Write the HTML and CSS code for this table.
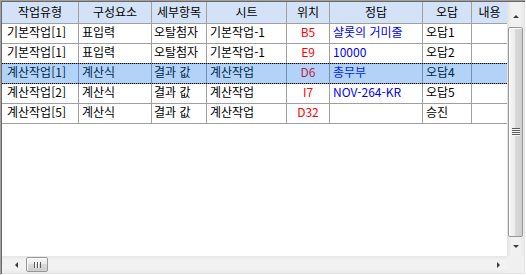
FILE: index.html
```html
<!DOCTYPE html>
<html lang="ko">
<head>
<meta charset="utf-8">
<title>Grid</title>
<link rel="stylesheet" href="styles.css">
</head>
<body>
<div class="grid">
  <div class="data">
    <div class="row head">
      <div class="c">작업유형</div>
      <div class="c">구성요소</div>
      <div class="c">세부항목</div>
      <div class="c">시트</div>
      <div class="c">위치</div>
      <div class="c">정답</div>
      <div class="c">오답</div>
      <div class="c last">내용</div>
    </div>
    <div class="row">
      <div class="c first">기본작업[1]</div>
      <div class="c">표입력</div>
      <div class="c narrow">오탈첨자</div>
      <div class="c">기본작업-1</div>
      <div class="c loc">B5</div>
      <div class="c ans">샬롯의 거미줄</div>
      <div class="c">오답1</div>
      <div class="c last"></div>
    </div>
    <div class="row">
      <div class="c first">기본작업[1]</div>
      <div class="c">표입력</div>
      <div class="c narrow">오탈첨자</div>
      <div class="c">기본작업-1</div>
      <div class="c loc">E9</div>
      <div class="c ans">10000</div>
      <div class="c">오답2</div>
      <div class="c last"></div>
    </div>
    <div class="row sel">
      <div class="c first">계산작업[1]</div>
      <div class="c">계산식</div>
      <div class="c narrow">결과 값</div>
      <div class="c">계산작업</div>
      <div class="c loc">D6</div>
      <div class="c ans">총무부</div>
      <div class="c">오답4</div>
      <div class="c last"></div>
    </div>
    <div class="row">
      <div class="c first">계산작업[2]</div>
      <div class="c">계산식</div>
      <div class="c narrow">결과 값</div>
      <div class="c">계산작업</div>
      <div class="c loc">I7</div>
      <div class="c ans">NOV-264-KR</div>
      <div class="c">오답5</div>
      <div class="c last"></div>
    </div>
    <div class="row">
      <div class="c first">계산작업[5]</div>
      <div class="c">계산식</div>
      <div class="c narrow">결과 값</div>
      <div class="c">계산작업</div>
      <div class="c loc">D32</div>
      <div class="c ans"></div>
      <div class="c">승진</div>
      <div class="c last"></div>
    </div>
  </div>
  <div class="vscroll">
    <div class="vbtn up"><span class="tri-up"></span></div>
    <div class="vthumb"><span class="vgrip"></span></div>
    <div class="vbtn down"><span class="tri-down"></span></div>
  </div>
  <div class="hscroll">
    <div class="hbtn left"><span class="tri-left"></span></div>
    <div class="hthumb"><span class="hgrip"></span></div>
    <div class="htrack"></div>
    <div class="hbtn right"><span class="tri-right"></span></div>
  </div>
  <div class="corner"></div>
</div>
</body>
</html>
```

FILE: styles.css
```css
html, body {
  margin: 0;
  padding: 0;
  background: #ffffff;
}

body {
  font-family: "Noto Sans CJK KR", "Noto Sans", sans-serif;
  font-size: 12px;
  color: #000000;
}

.grid {
  width: 526px;
  height: 275px;
  box-sizing: border-box;
  border: 1px solid;
  border-color: #a0a0a0 #ffffff #ffffff #a0a0a0;
  padding: 1px;
  box-shadow: inset 1px 1px 0 #696969, inset -1px -1px 0 #e3e3e3;
  display: grid;
  grid-template-columns: 505px 17px;
  grid-template-rows: 254px 17px;
}

.data {
  background: #ffffff;
  overflow: hidden;
}

.row {
  display: grid;
  grid-template-columns: 77px 73px 55px 80px 43px 93px 49px 35px;
}

.c {
  box-sizing: border-box;
  height: 20px;
  border-right: 1px solid #a0a0a0;
  border-bottom: 1px solid #a0a0a0;
  padding-left: 3px;
  line-height: 15px;
  white-space: nowrap;
}

.c.first {
  padding-left: 5px;
}

.c.narrow {
  padding-left: 2px;
}

.c.last {
  border-right: none;
}

.c.loc {
  padding-left: 0;
  text-align: center;
  color: #ff0000;
}

.c.ans {
  color: #0000ff;
}

.head .c {
  height: 22px;
  line-height: 19px;
  padding-left: 0;
  text-align: center;
  background: #d3e2f6;
}

.row.sel {
  position: relative;
}

.row.sel::after {
  content: "";
  position: absolute;
  left: 0;
  right: 0;
  top: -1px;
  bottom: 0;
  border-top: 1px dotted #000000;
  border-bottom: 1px dotted #000000;
  background: rgba(0, 110, 230, 0.3);
}

/* vertical scrollbar */
.vscroll {
  display: flex;
  flex-direction: column;
  background: linear-gradient(to right, #e2e2e2, #f1f1f1 25%, #f1f1f1 75%, #e9e9e9);
}

.vbtn {
  display: flex;
  justify-content: center;
  box-sizing: border-box;
}

.vbtn.up {
  height: 25px;
  padding-top: 13px;
}

.vbtn.down {
  flex: 1;
  align-items: center;
}

.tri-up {
  width: 0;
  height: 0;
  border-left: 3px solid transparent;
  border-right: 3px solid transparent;
  border-bottom: 3px solid #3c3c3c;
}

.tri-down {
  width: 0;
  height: 0;
  border-left: 3px solid transparent;
  border-right: 3px solid transparent;
  border-top: 3px solid #3c3c3c;
}

.vthumb {
  height: 210px;
  margin: 0 1px;
  box-sizing: border-box;
  border: 1px solid #979797;
  border-radius: 2px;
  background: linear-gradient(to right, #f6f6f6, #ebebeb 50%, #dadada 50%, #cfcfcf);
  box-shadow: inset 1px 1px 0 #ffffff;
  display: flex;
  align-items: center;
  justify-content: center;
}

.vgrip {
  width: 8px;
  height: 8px;
  background: repeating-linear-gradient(to bottom, #5a5a5a 0 1px, #f8f8f8 1px 2px);
}

/* horizontal scrollbar */
.hscroll {
  display: flex;
  background: linear-gradient(to bottom, #e6e6e6, #f2f2f2 25%, #f2f2f2 75%, #ebebeb);
}

.hbtn {
  display: flex;
  align-items: center;
  box-sizing: border-box;
}

.hbtn.left {
  width: 24px;
  padding-left: 13px;
}

.hbtn.right {
  width: 18px;
  padding-left: 8px;
}

.tri-left {
  width: 0;
  height: 0;
  border-top: 3px solid transparent;
  border-bottom: 3px solid transparent;
  border-right: 3px solid #3c3c3c;
}

.tri-right {
  width: 0;
  height: 0;
  border-top: 3px solid transparent;
  border-bottom: 3px solid transparent;
  border-left: 3px solid #3c3c3c;
}

.hthumb {
  width: 22px;
  margin: 1px 0;
  box-sizing: border-box;
  border: 1px solid #979797;
  border-radius: 2px;
  background: linear-gradient(to bottom, #f6f6f6, #ebebeb 50%, #dadada 50%, #cfcfcf);
  box-shadow: inset 1px 1px 0 #ffffff;
  display: flex;
  align-items: center;
  justify-content: center;
}

.hgrip {
  width: 7px;
  height: 6px;
  background: repeating-linear-gradient(to right, #5a5a5a 0 1px, #f8f8f8 1px 2px, transparent 2px 3px);
}

.htrack {
  flex: 1;
}

.corner {
  background: #f0f0f0;
}
```
